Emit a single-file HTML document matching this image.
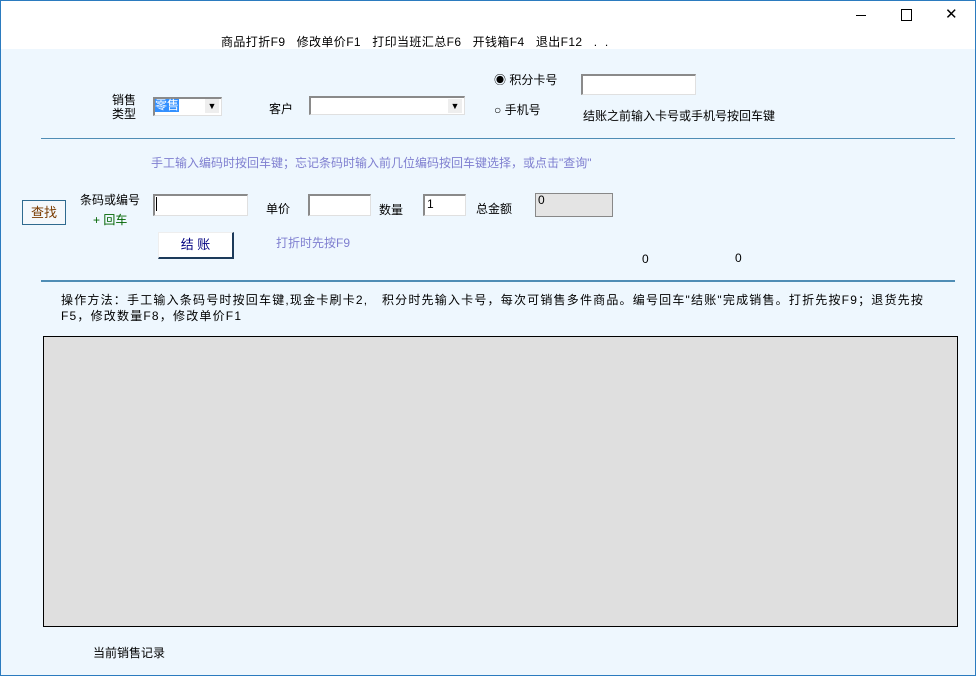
<!DOCTYPE html>
<html><head><meta charset="utf-8"><style>
body{margin:0;width:976px;height:676px;overflow:hidden;font-family:"Liberation Sans","Noto Sans CJK SC","WenQuanYi Zen Hei",sans-serif;font-size:12px;color:#000;position:relative;background:#eef7fe}
.a{position:absolute;white-space:nowrap}
.top{position:absolute;left:0;top:0;width:976px;height:49px;background:#fff}
.bl{position:absolute;left:0;top:0;width:1px;height:676px;background:#2b7bbf}
.br{position:absolute;right:0;top:0;width:1px;height:676px;background:#2b7bbf}
.bb{position:absolute;left:0;bottom:0;width:976px;height:1px;background:#2b7bbf}
.bt{position:absolute;left:0;top:0;width:976px;height:1px;background:#2b7bbf}
.inp{position:absolute;background:#fff;border-top:2px solid #8a8a8a;border-left:2px solid #8a8a8a;border-right:1px solid #e0e0e0;border-bottom:1px solid #e0e0e0;box-sizing:border-box}
.hr{position:absolute;left:41px;width:914px;height:2px;background:#4f8db5}
</style></head><body>
<div class="top"></div>
<div class="bl"></div><div class="br"></div><div class="bb"></div><div class="bt"></div>
<div class="a" style="left:856px;top:15px;width:10px;height:1px;background:#000"></div>
<div class="a" style="left:901px;top:9px;width:9px;height:10px;border:1px solid #000"></div>
<div class="a" style="left:945px;top:5px;font-size:15px">&#10005;</div>
<div class="a" style="left:221px;top:33px;font-size:12px;letter-spacing:0.4px">商品打折F9&nbsp;&nbsp;&nbsp;修改单价F1&nbsp;&nbsp;&nbsp;打印当班汇总F6&nbsp;&nbsp;&nbsp;开钱箱F4&nbsp;&nbsp;&nbsp;退出F12&nbsp;&nbsp;&nbsp;.&nbsp;&nbsp;.</div>

<div class="a" style="left:112px;top:93px;line-height:14px">销售<br>类型</div>
<div class="inp" style="left:153px;top:97px;width:69px;height:19px"></div>
<div class="a" style="left:155px;top:99px;background:#3390ff;color:#fff;font-size:12px;line-height:13px">零售</div>
<div class="a" style="left:205px;top:99px;width:14px;height:14px;background:#eee;font-size:9px;text-align:center;line-height:14px">&#9660;</div>
<div class="a" style="left:269px;top:100px">客户</div>
<div class="inp" style="left:309px;top:96px;width:156px;height:19px"></div>
<div class="a" style="left:448px;top:99px;width:14px;height:14px;background:#eee;font-size:9px;text-align:center;line-height:14px">&#9660;</div>
<div class="a" style="left:494px;top:71px">&#9673; 积分卡号</div>
<div class="a" style="left:494px;top:101px">&#9675; 手机号</div>
<div class="inp" style="left:581px;top:74px;width:115px;height:21px"></div>
<div class="a" style="left:583px;top:107px">结账之前输入卡号或手机号按回车键</div>
<div class="hr" style="top:138px;height:1px"></div>

<div class="a" style="left:151px;top:154px;color:#7f7fd0">手工输入编码时按回车键；忘记条码时输入前几位编码按回车键选择，或点击"查询"</div>
<div class="a" style="left:22px;top:200px;width:42px;height:23px;border:1px solid #2f6a8f;background:#f4f8fc;color:#7a3b00;text-align:center;line-height:23px;font-size:13px">查找</div>
<div class="a" style="left:80px;top:191px">条码或编号</div>
<div class="a" style="left:93px;top:211px;color:#006400">+ 回车</div>
<div class="inp" style="left:153px;top:194px;width:95px;height:22px"></div>
<div class="a" style="left:156px;top:197px;width:1px;height:14px;background:#000"></div>
<div class="a" style="left:266px;top:200px">单价</div>
<div class="inp" style="left:308px;top:194px;width:63px;height:22px"></div>
<div class="a" style="left:379px;top:201px">数量</div>
<div class="inp" style="left:423px;top:194px;width:43px;height:22px"></div>
<div class="a" style="left:427px;top:197px">1</div>
<div class="a" style="left:476px;top:200px">总金额</div>
<div class="a" style="left:535px;top:193px;width:78px;height:24px;background:#e4e4e4;border:1px solid #888;box-sizing:border-box"></div>
<div class="a" style="left:538px;top:193px">0</div>
<div class="a" style="left:158px;top:232px;width:76px;height:27px;background:#fff;border-right:2px solid #1c3a5a;border-bottom:2px solid #1c3a5a;border-top:1px solid #eee;border-left:1px solid #eee;box-sizing:border-box;text-align:center;line-height:24px;color:#000080;font-size:13px">结 账</div>
<div class="a" style="left:276px;top:234px;color:#7f7fd0">打折时先按F9</div>
<div class="a" style="left:642px;top:252px">0</div>
<div class="a" style="left:735px;top:251px">0</div>
<div class="hr" style="top:280px"></div>

<div class="a" style="left:61px;top:292px;line-height:16px;letter-spacing:1.2px">操作方法：手工输入条码号时按回车键,现金卡刷卡2,&nbsp;&nbsp;&nbsp;积分时先输入卡号，每次可销售多件商品。编号回车"结账"完成销售。打折先按F9；退货先按<br>F5，修改数量F8，修改单价F1</div>

<div class="a" style="left:43px;top:336px;width:915px;height:291px;background:#dfdfdf;border:1px solid #000;box-sizing:border-box"></div>
<div class="a" style="left:93px;top:644px">当前销售记录</div>
</body></html>
